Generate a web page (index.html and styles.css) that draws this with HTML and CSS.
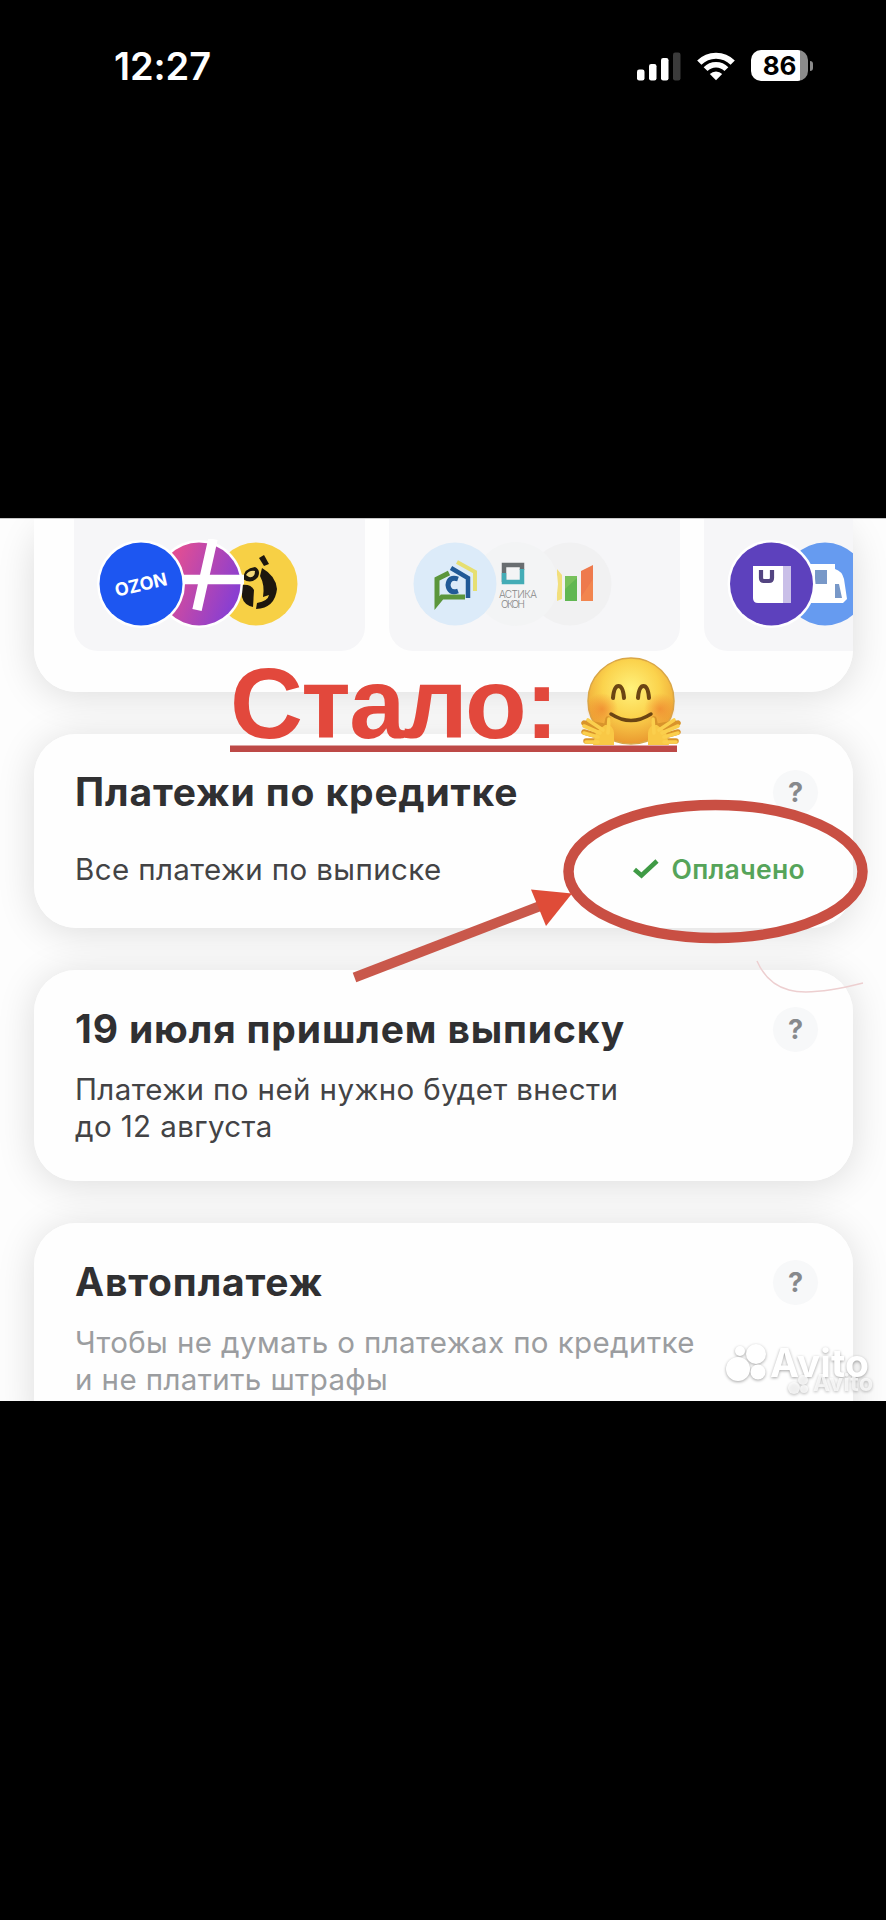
FILE: index.html
```html
<!DOCTYPE html>
<html lang="ru">
<head>
<meta charset="utf-8">
<title>Платежи по кредитке</title>
<link rel="stylesheet" href="styles.css">
</head>
<body>
<header class="status">
  <span class="time">12:27</span>
  <div class="indicators">
    <svg class="signal" width="34" height="30" viewBox="0 0 34 30">
      <rect x="0" y="17.5" width="7.5" height="11" rx="2.2" fill="#fff"/>
      <rect x="12" y="12" width="7.5" height="16.5" rx="2.2" fill="#fff"/>
      <rect x="24" y="6" width="7.5" height="22.500" rx="2.2" fill="#fff"/>
      <rect x="36" y="0.500" width="7.5" height="28" rx="2.2" fill="#3b3b3b"/>
    </svg>
    <svg class="wifi" width="38" height="30" viewBox="0 0 38 30">
      <g fill="none" stroke="#fff" stroke-width="6">
        <path d="M2.300 10.600A23.500 23.500 0 0 1 35.700 10.600"/>
        <path d="M8.600 17.200A14.500 14.500 0 0 1 29.400 17.200" stroke-width="5.400"/>
      </g>
      <path d="M12.800 22A8.700 8.700 0 0 1 25.200 22L19 28.300Z" fill="#fff"/>
    </svg>
    <div class="battery"><span class="level">86</span></div>
    <i class="nub"></i>
  </div>
</header>

<main class="photo">
  <section class="card offers">
    <div class="tile">
      <svg class="logos" width="260" height="90" viewBox="0 0 260 90">
        <defs>
          <linearGradient id="pink" x1="0" x2="1" y1="0.200" y2="0.600">
            <stop offset="0.100" stop-color="#e84f8f"/><stop offset="0.950" stop-color="#8b3fd0"/>
          </linearGradient>
        </defs>
        <circle cx="163" cy="45" r="41.500" fill="#f7d045"/>
        <path d="M166 19l5-3 5 9-5 2z" fill="#1d170e"/>
        <path d="M150 40Q151 29 162 28Q168 31 165 38Q158 46 150 40Z" fill="#1d170e"/>
        <path d="M153 36q3-5 9-4 0 7-6 6z" fill="#f3d97a"/>
        <path d="M149 46Q158 45 161 51L160 68Q151 66 149 58Z" fill="#1d170e"/>
        <path d="M169 29Q183 37 184 50Q182 69 163 70L164 64Q175 62 176 56L170 58Q172 46 167 37Z" fill="#1d170e"/>
        <circle cx="106" cy="45" r="44" fill="#fff"/>
        <circle cx="106" cy="45" r="41.500" fill="url(#pink)"/>
        <path d="M120 0L104 71M87 40.500h64" stroke="#fff" stroke-width="9.500"/>
        <circle cx="48" cy="45" r="44" fill="#fff"/>
        <circle cx="48" cy="45" r="41.500" fill="#1d56f1"/>
        <text class="ozon" x="48" y="52" text-anchor="middle" textLength="53" lengthAdjust="spacingAndGlyphs" transform="rotate(-13 48 46)">OZON</text>
      </svg>
    </div>
    <div class="tile">
      <svg class="logos" width="260" height="90" viewBox="0 0 260 90">
        <circle cx="162" cy="45" r="41.500" fill="#f1f1f2"/>
        <g transform="translate(-9 0)">
          <path d="M158 30v32l5-2V36z" fill="#f2df7c"/>
          <path d="M166 37h12v25h-12z" fill="#78c15c"/><path d="M166 50l12-11v23h-12z" fill="#4fae4b" opacity=".55"/>
          <path d="M182 32l12-6v36h-12z" fill="#ee7a4d"/><path d="M182 58l12-18v22h-12z" fill="#f58c52" opacity=".6"/>
        </g>
        <circle cx="108" cy="45" r="42" fill="#f3f4f5"/>
        <path d="M96 43V26h18v5" fill="none" stroke="#686d70" stroke-width="4.500"/>
        <path d="M96 34v9h18V30" fill="none" stroke="#43acb6" stroke-width="4.500"/>
        <circle cx="47" cy="45" r="41.500" fill="#dcebf9"/>
        <text class="tiny" x="91" y="59" textLength="38">АСТИКА</text>
        <text class="tiny" x="93" y="69" textLength="24">ОКОН</text>
        <path d="M49 23l18 10v19" fill="none" stroke="#e6df72" stroke-width="4"/>
        <path d="M41 34l-12 6v24l5-6h23" fill="none" stroke="#5b963c" stroke-width="5"/>
        <path d="M43 29l17 10v20" fill="none" stroke="#215a97" stroke-width="4.500"/>
        <path d="M50 40q-9-3-10 6 1 9 10 6" fill="none" stroke="#215a97" stroke-width="5"/>
      </svg>
    </div>
    <div class="tile tile-cut">
      <svg class="logos" width="126" height="90" viewBox="0 0 126 90">
        <circle cx="100" cy="45" r="41.500" fill="#669bf0"/>
        <path d="M84 25h26v5q7 2 9 10l3 20-4 4H84z" fill="#fff"/>
        <path d="M90 31h12v14H90zM110 45h4l3 14h-7z" fill="#7898c8"/>
        <circle cx="46.500" cy="45" r="44" fill="#fff"/>
        <circle cx="46.500" cy="45" r="41.500" fill="#5d41bd"/>
        <path d="M28 27h38v37H33q-5 0-5-5z" fill="#fff"/>
        <path d="M58 27h8v37h-8z" fill="#c9bfe8"/>
        <path d="M36 31v8q0 3 3 3h5q3 0 3-3v-8" fill="none" stroke="#534481" stroke-width="4.200"/>
      </svg>
    </div>
  </section>

  <section class="card payments">
    <div class="head"><h2>Платежи по кредитке</h2><span class="help">?</span></div>
    <div class="row">
      <p>Все платежи по выписке</p>
      <div class="paid">
        <svg width="28" height="22" viewBox="0 0 28 22"><path d="M2.500 11.500L9.500 17.500L25 3" fill="none" stroke="#3f9a45" stroke-width="4.600"/></svg>
        <span class="paid-text">Оплачено</span>
      </div>
    </div>
  </section>

  <section class="card statement">
    <div class="head"><h2>19 июля пришлем выписку</h2><span class="help">?</span></div>
    <p class="copy">Платежи по ней нужно будет внести<br>до 12 августа</p>
  </section>

  <section class="card autopay">
    <div class="head"><h2>Автоплатеж</h2><span class="help">?</span></div>
    <p class="copy muted">Чтобы не думать о платежах по кредитке<br>и не платить штрафы</p>
  </section>

  <div class="headline">
    <span class="headline-text">Стало:</span>
    <svg class="hug" width="100" height="96" viewBox="0 0 100 96">
      <defs>
        <radialGradient id="face" cx=".5" cy=".36" r=".66">
          <stop offset="0" stop-color="#fff27c"/><stop offset=".5" stop-color="#fbd34d"/><stop offset="1" stop-color="#e9952d"/>
        </radialGradient>
        <radialGradient id="cheek"><stop offset="0" stop-color="#ee7a2b" stop-opacity=".65"/><stop offset="1" stop-color="#ee7a2b" stop-opacity="0"/></radialGradient>
      </defs>
      <circle cx="50" cy="47" r="43" fill="url(#face)" stroke="#d9a647" stroke-width="1.500"/>
      <circle cx="21" cy="55" r="16" fill="url(#cheek)"/><circle cx="79" cy="55" r="16" fill="url(#cheek)"/>
      <g fill="none" stroke="#6b4513" stroke-linecap="round">
        <path d="M32 44q1-12 5.500-12T43 44M57 44q1-12 5.500-12T68 44" stroke-width="4"/>
        <path d="M30 60q20 13 40 0" stroke-width="3.500"/>
      </g>
      <g id="hand">
        <path d="M22 72l-16-3M19 77L3 69M17 82L3 78M17 87H5M24 80l3-15" fill="none" stroke="#d9942b" stroke-width="5.500" stroke-linecap="round"/>
        <path d="M12 91L15 78 24 71q8-1 9 8v12z" fill="#f9c845"/>
        <path d="M22 76L7 66M19 79L3 72M17 83L3 79M17 88H5M27 79l1-14" fill="none" stroke="#fbcf4d" stroke-width="3.600" stroke-linecap="round"/>
      </g>
      <use href="#hand" transform="matrix(-1 0 0 1 100 0)"/>
    </svg>
  </div>

  <svg class="marks" width="886" height="883" viewBox="0 518 886 883">
    <path d="M230 748.800H677" stroke="#bd4947" stroke-width="6.500"/>
    <ellipse cx="715.500" cy="871.500" rx="147" ry="66.500" fill="none" stroke="#c94f43" stroke-width="10.500"/>
    <path d="M354.500 977.500L548 903" stroke="#c9584b" stroke-width="10"/>
    <path d="M531 889.500L572 893.500 546 926z" fill="#df4c38"/>
    <path d="M757 961Q767 984 789 990T863 983" fill="none" stroke="#edcfd0" stroke-width="1.500"/>
  </svg>

  <svg class="watermark" width="160" height="70" viewBox="720 1331 160 70">
    <g fill="#fff">
      <g class="small-mark"><circle cx="794" cy="1388" r="6"/><circle cx="804" cy="1389" r="4"/><circle cx="803" cy="1380" r="5"/>
        <text class="avito-small" x="813" y="1391" textLength="60">Avito</text></g>
      <circle cx="738" cy="1369" r="12"/><circle cx="758" cy="1372" r="7.500"/><circle cx="756" cy="1354" r="10"/><circle cx="740" cy="1351" r="5"/>
      <text class="avito" x="770" y="1377" textLength="99">Avito</text>
    </g>
  </svg>
</main>
</body>
</html>
```

FILE: styles.css
```css
* { box-sizing: border-box; }
body {
  margin: 0;
  height: 1920px;
  background: #000;
  font-family: Inter, "Noto Sans", sans-serif;
  overflow: hidden;
}
h2, p { margin: 0; }

.status {
  height: 518px;
  padding: 46px 73px 0 114px;
  display: flex;
  justify-content: space-between;
  align-items: flex-start;
  color: #fff;
}
.time { font-size: 38px; line-height: 40px; font-weight: 600; letter-spacing: -0.1px; }
.indicators { display: flex; align-items: flex-start; padding-top: 4px; }
.signal { width: 34px; overflow: visible; margin: 1.5px 26px 0 0; flex: none; }
.wifi { margin: 2px 16px 0 0; }
.battery {
  width: 57px;
  height: 31px;
  border-radius: 10px;
  background: linear-gradient(90deg, #fff 49px, #8b8b8b 49px);
  color: #000;
  text-align: center;
}
.level { font-size: 26px; line-height: 31px; font-weight: 700; letter-spacing: -0.1px; }
.nub { width: 3px; height: 10px; margin: 11px 0 0 2px; border-radius: 0 4px 4px 0; background: #8b8b8b; }

.photo {
  position: relative;
  z-index: 0;
  height: 883px;
  padding: 0 33px 0 34px;
  display: flex;
  flex-direction: column;
  gap: 42px;
  overflow: hidden;
  background: #fdfdfd;
  color: #303032;
  border-top: 1px solid #c8c8c8;
}
.card {
  position: relative;
  flex: none;
  border-radius: 42px;
  background: #fefefe;
  padding: 0 35px 0 41px;
}
.card::before {
  content: "";
  position: absolute;
  z-index: -1;
  inset: 0;
  border-radius: 42px;
  box-shadow: 0 4px 38px rgba(0, 0, 0, 0.135);
}
.offers {
  height: 173px;
  padding: 0 0 41px 40px;
  display: flex;
  gap: 24px;
  border-radius: 0 0 42px 42px;
}
.tile { width: 291px; flex: none; border-radius: 0 0 24px 24px; background: #f6f6f8; padding: 20px 0 0 19px; }
.tile-cut { width: 149px; border-radius: 0 0 0 24px; }
.logos { display: block; overflow: hidden; }
.tile-cut .logos { width: 130px; height: 90px; }
.ozon { font: 700 18px Inter, sans-serif; fill: #fff; }
.tiny { font: 300 10px Inter, sans-serif; fill: #888; }

.payments { height: 194px; padding-top: 36px; }
.statement { height: 211px; padding-top: 37px; }
.autopay { height: 220px; padding-top: 37px; }
.head { display: flex; justify-content: space-between; align-items: center; height: 44px; }
.head h2 { font-size: 39px; line-height: 44px; font-weight: 700; letter-spacing: 0.85px; white-space: nowrap; }
.help {
  width: 45px;
  height: 45px;
  border-radius: 50%;
  background: #f7f8f9;
  color: #87898c;
  font-size: 27px;
  line-height: 45px;
  font-weight: 700;
  text-align: center;
}
.row { display: flex; justify-content: space-between; align-items: center; height: 36px; margin-top: 37px; padding-right: 13px; }
.row p, .copy { font-size: 29.5px; line-height: 36.5px; letter-spacing: 0.4px; color: #434345; white-space: nowrap; }
.copy { margin-top: 20px; }
.copy.muted { color: #9b9da0; }
.paid { display: flex; align-items: center; gap: 11px; }
.paid-text { font-size: 26.5px; line-height: 36px; font-weight: 600; letter-spacing: 0.3px; color: #56a45a; }

.headline { position: absolute; left: 230px; top: 130px; display: flex; align-items: flex-start; }
.headline-text { width: 351px; font: 700 101px/110px "Liberation Sans", sans-serif; letter-spacing: -1.6px; color: #e2483c; margin-top: -1px; }
.hug { margin-top: 5px; }
.marks { position: absolute; left: 0; top: -1px; }
.watermark { position: absolute; left: 720px; top: 812px; filter: drop-shadow(0 1px 1.5px rgba(0, 0, 0, 0.35)); }
.avito { font: 700 39px Inter, sans-serif; }
.avito-small { font: 700 23px Inter, sans-serif; }
.small-mark { opacity: 0.75; }
```
